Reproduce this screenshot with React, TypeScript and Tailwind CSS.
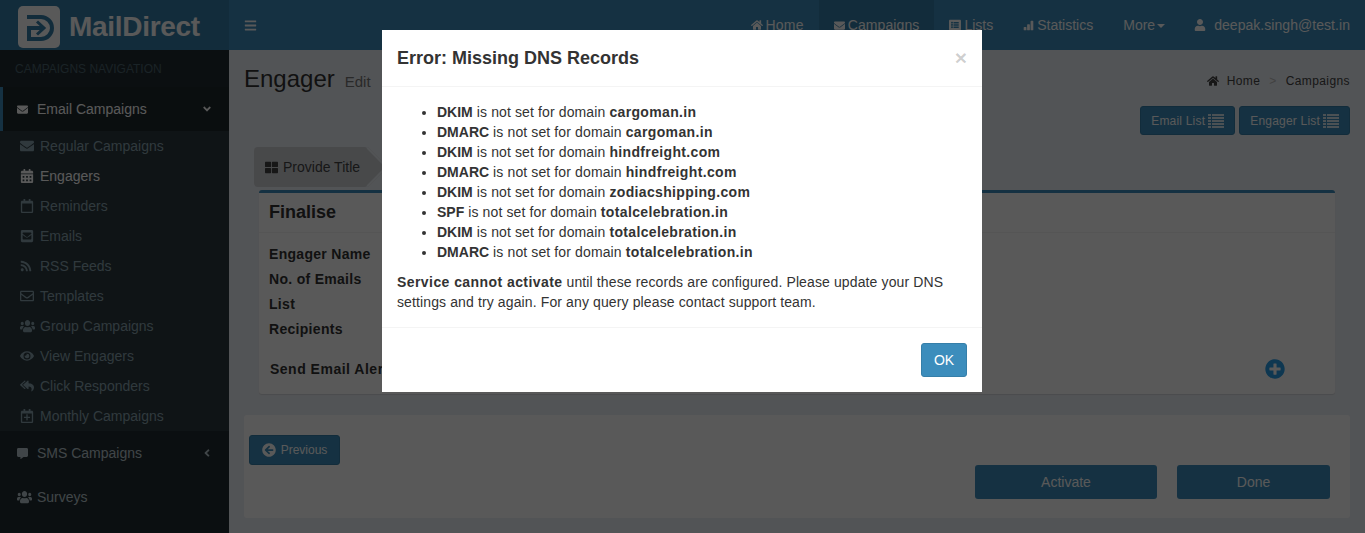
import type { ReactNode } from "react"
import {
  FaAngleDown,
  FaAngleLeft,
  FaArrowCircleLeft,
  FaBars,
  FaCalendarAlt,
  FaCommentAlt,
  FaEnvelope,
  FaEnvelopeSquare,
  FaEye,
  FaHome,
  FaListAlt,
  FaPlusCircle,
  FaRegCalendar,
  FaRegCalendarPlus,
  FaRegEnvelope,
  FaReplyAll,
  FaRss,
  FaThLarge,
  FaUser,
  FaUsers,
} from "react-icons/fa"
import { BsBarChartFill } from "react-icons/bs"

const subItems: { label: string; icon: ReactNode; active?: boolean }[] = [
  { label: "Regular Campaigns", icon: <FaEnvelope className="h-[14px] w-[14px]" /> },
  { label: "Engagers", icon: <FaCalendarAlt className="h-[14px] w-[14px]" />, active: true },
  { label: "Reminders", icon: <FaRegCalendar className="h-[14px] w-[14px]" /> },
  { label: "Emails", icon: <FaEnvelopeSquare className="h-[14px] w-[14px]" /> },
  { label: "RSS Feeds", icon: <FaRss className="h-[12px] w-[12px]" /> },
  { label: "Templates", icon: <FaRegEnvelope className="h-[14px] w-[14px]" /> },
  { label: "Group Campaigns", icon: <FaUsers preserveAspectRatio="none" className="h-[14px] w-[15px]" /> },
  { label: "View Engagers", icon: <FaEye className="h-[14px] w-[14px]" /> },
  { label: "Click Responders", icon: <FaReplyAll className="h-[14px] w-[14px]" /> },
  { label: "Monthly Campaigns", icon: <FaRegCalendarPlus className="h-[14px] w-[14px]" /> },
]

const dnsRows = [
  ["DKIM", "cargoman.in"],
  ["DMARC", "cargoman.in"],
  ["DKIM", "hindfreight.com"],
  ["DMARC", "hindfreight.com"],
  ["DKIM", "zodiacshipping.com"],
  ["SPF", "totalcelebration.in"],
  ["DKIM", "totalcelebration.in"],
  ["DMARC", "totalcelebration.in"],
]

function Logo() {
  return (
    <div className="flex h-[50px] w-[229px] shrink-0 items-center bg-[#367fa9] pl-[18px] pt-[4px]">
      <svg width="42" height="42" viewBox="0 0 42 42" className="shrink-0">
        <rect width="42" height="42" rx="5" fill="#ffffff" />
        <path d="M9 11h14a11 11 0 0 1 0 22H11V22h15" fill="none" stroke="#367fa9" strokeWidth="4" />
        <path d="M19 15.500l7 6.500-7 6.500" fill="none" stroke="#367fa9" strokeWidth="3" />
      </svg>
      <span className="ml-[9px] text-[28px] font-bold tracking-[-0.3px] text-white">MailDirect</span>
    </div>
  )
}

function TopNav() {
  return (
    <header className="flex h-[50px] shrink-0 bg-[#3c8dbc] text-white">
      <Logo />
      <div className="flex h-full items-center pl-[15px]">
        <FaBars className="h-[13px] w-[13px]" />
      </div>
      <nav className="ml-auto flex h-full items-center pr-[15px] text-sm">
        <a className="flex h-full items-center gap-[3px] px-[15px] tracking-[0.2px]">
          <FaHome className="h-[12px] w-[12px]" />Home
        </a>
        <a className="flex h-full items-center gap-[3px] bg-[#367fa9] px-[15px] tracking-[0.1px]">
          <FaEnvelope className="h-[11px] w-[11px]" />Campaigns
        </a>
        <a className="flex h-full items-center gap-[3px] px-[15px]">
          <FaListAlt className="h-[12px] w-[12px]" />Lists
        </a>
        <a className="flex h-full items-center gap-[3px] px-[15px]">
          <BsBarChartFill className="h-[11px] w-[11px]" />Statistics
        </a>
        <a className="flex h-full items-center gap-[2px] px-[15px]">
          More<span className="mt-[2px] border-x-[4px] border-t-[4px] border-x-transparent border-t-white" />
        </a>
        <a className="flex h-full items-center gap-[8px] pl-[14px] tracking-[0.05px]">
          <FaUser className="h-[12px] w-[12px]" />deepak.singh@test.in
        </a>
      </nav>
    </header>
  )
}

function Sidebar() {
  return (
    <aside className="w-[229px] shrink-0 bg-[#222d32] text-sm text-[#b8c7ce]">
      <div className="flex h-[37px] items-center pl-[15px] text-xs text-[#4b646f]">CAMPAIGNS NAVIGATION</div>
      <div className="flex h-[44px] items-center border-l-[3px] border-[#3c8dbc] bg-[#1e282c] pl-[14px] pr-[16px] text-white">
        <FaEnvelope className="h-[11px] w-[11px]" />
        <span className="ml-[9px]">Email Campaigns</span>
        <FaAngleDown className="ml-auto h-[12px] w-[12px]" />
      </div>
      <ul className="bg-[#2c3b41] text-[#8aa4af]">
        {subItems.map((item) => (
          <li key={item.label} className={`flex h-[30px] items-center pl-[20px] ${item.active ? "text-white" : ""}`}>
            <span className="flex w-[20px] shrink-0 items-center">{item.icon}</span>
            {item.label}
          </li>
        ))}
      </ul>
      <div className="flex h-[44px] items-center pl-[17px] pr-[16px]">
        <FaCommentAlt className="h-[11px] w-[11px]" />
        <span className="ml-[9px]">SMS Campaigns</span>
        <FaAngleLeft className="ml-auto h-[12px] w-[12px]" />
      </div>
      <div className="flex h-[44px] items-center pl-[17px]">
        <FaUsers preserveAspectRatio="none" className="h-[14px] w-[15px]" />
        <span className="ml-[5px]">Surveys</span>
      </div>
    </aside>
  )
}

function StripedListIcon() {
  return (
    <svg width="16" height="14" viewBox="0 0 16 14" fill="#ffffff" className="shrink-0 opacity-80">
      <rect y="0" width="3" height="2" />
      <rect x="4" y="0" width="12" height="2" />
      <rect y="3" width="3" height="2" />
      <rect x="4" y="3" width="12" height="2" />
      <rect y="6" width="3" height="2" />
      <rect x="4" y="6" width="12" height="2" />
      <rect y="9" width="3" height="2" />
      <rect x="4" y="9" width="12" height="2" />
      <rect y="12" width="3" height="2" />
      <rect x="4" y="12" width="12" height="2" />
    </svg>
  )
}

function ListButton({ label }: { label: string }) {
  return (
    <button className="flex h-[29px] items-center gap-[3px] rounded-[3px] border border-[#367fa9] bg-[#3c8dbc] px-[10px] text-xs tracking-[0.2px] text-white">
      {label}
      <StripedListIcon />
    </button>
  )
}

function Content() {
  return (
    <main className="min-w-0 flex-1 bg-[#ecf0f5] text-[#333333]">
      <div className="flex h-[56px] items-center justify-between px-[15px] pt-[2px]">
        <h1 className="flex items-baseline text-2xl">
          Engager<small className="ml-[10px] text-[15px] text-[#777777]">Edit</small>
        </h1>
        <div className="mt-[4px] flex items-center text-xs tracking-[0.4px] text-[#444444]">
          <FaHome className="mr-[8px] h-[12px] w-[12px]" />Home
          <span className="mx-[9px] text-[#bbbbbb]">&gt;</span>Campaigns
        </div>
      </div>
      <div className="flex justify-end gap-1 pr-[15px]">
        <ListButton label="Email List" />
        <ListButton label="Engager List" />
      </div>
      <div className="mt-[12px] pl-[25px]">
        <div className="relative flex h-[40px] w-[114px] items-center gap-[5px] rounded-[4px] bg-[#cdd1d5] pl-[11px] text-sm text-[#444444]">
          <FaThLarge className="h-[13px] w-[13px]" />
          <span className="relative z-10">Provide Title</span>
          <span className="absolute right-[-14px] top-[6px] h-[28px] w-[28px] rotate-45 border-r-[2px] border-t-[2px] border-[#ecf0f5] bg-[#cdd1d5]" />
        </div>
      </div>
      <section className="mx-[30px] mt-[3px] h-[204px] rounded-[3px] border-t-[3px] border-[#3c8dbc] bg-white shadow-[0_1px_1px_rgba(0,0,0,0.1)]">
        <h3 className="flex h-[40px] items-center border-b border-[#f4f4f4] pb-[2px] pl-[10px] text-lg font-bold">Finalise</h3>
        <dl className="pl-[10px] pt-[8px] text-sm font-bold tracking-[0.3px]">
          <dt className="flex h-[25px] items-center">Engager Name</dt>
          <dt className="flex h-[25px] items-center">No. of Emails</dt>
          <dt className="flex h-[25px] items-center">List</dt>
          <dt className="flex h-[25px] items-center">Recipients</dt>
        </dl>
        <div className="mt-[18px] flex items-center justify-between pl-[11px] pr-[50px] text-sm font-bold tracking-[0.5px]">
          Send Email Alert
          <FaPlusCircle className="h-[20px] w-[20px] text-[#2a9fe8]" />
        </div>
      </section>
      <section className="mx-[15px] mt-[21px] h-[103px] rounded-[3px] bg-white px-[5px] pt-[20px]">
        <button className="flex h-[30px] w-[91px] items-center justify-center gap-[5px] rounded-[3px] border border-[#367fa9] bg-[#3c8dbc] text-xs text-white">
          <FaArrowCircleLeft className="h-[14px] w-[14px]" />Previous
        </button>
        <div className="flex justify-end gap-[20px] pr-[15px]">
          <button className="h-[34px] w-[182px] rounded-[3px] bg-[#3c8dbc] text-sm text-white">Activate</button>
          <button className="h-[34px] w-[153px] rounded-[3px] bg-[#3c8dbc] text-sm text-white">Done</button>
        </div>
      </section>
    </main>
  )
}

function DnsModal() {
  return (
    <div className="fixed inset-0 z-50 flex justify-center bg-black/65 pr-[1px] pt-[30px]">
      <div className="h-[362px] w-[600px] bg-white text-sm text-[#333333]">
        <div className="flex h-[57px] items-center justify-between border-b border-[#f4f4f4] px-[15px]">
          <h4 className="text-lg font-bold">Error: Missing DNS Records</h4>
          <span className="text-[21px] font-bold text-black/20">×</span>
        </div>
        <div className="p-[15px] leading-5 tracking-[0.12px]">
          <ul className="mb-[10px] list-disc pl-[40px]">
            {dnsRows.map(([record, domain], i) => (
              <li key={i}>
                <b className="tracking-normal">{record}</b> is not set for domain <b className="tracking-[0.35px]">{domain}</b>
              </li>
            ))}
          </ul>
          <p>
            <b className="tracking-[0.43px]">Service cannot activate</b> until these records are configured. Please update your DNS settings and try again. For any query please contact support team.
          </p>
        </div>
        <div className="flex justify-end border-t border-[#f4f4f4] p-[15px]">
          <button className="h-[34px] w-[46px] rounded-[3px] border border-[#367fa9] bg-[#3c8dbc] text-sm text-white">OK</button>
        </div>
      </div>
    </div>
  )
}

export default function App() {
  return (
    <div className="flex h-[533px] flex-col overflow-hidden font-['Liberation_Sans',Arial,sans-serif]">
      <TopNav />
      <div className="flex min-h-0 flex-1">
        <Sidebar />
        <Content />
      </div>
      <DnsModal />
    </div>
  )
}
